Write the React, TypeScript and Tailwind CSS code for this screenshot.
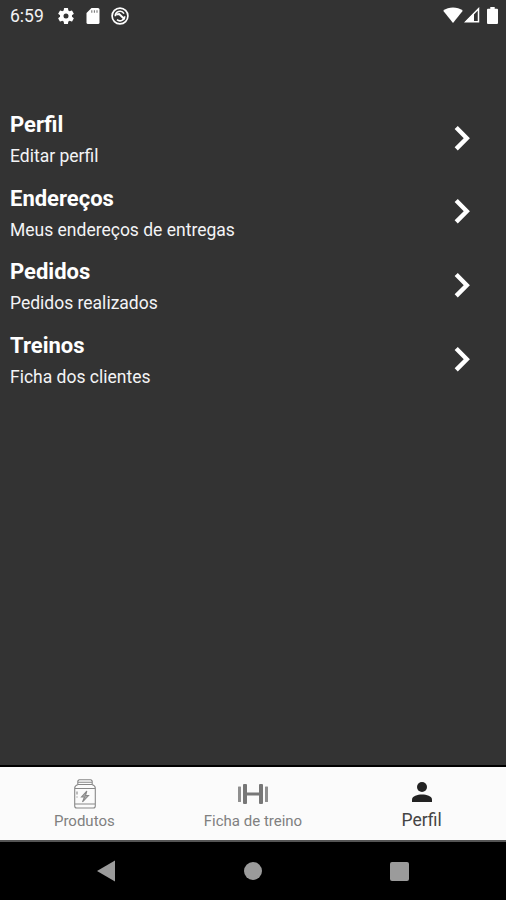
import React from 'react';

const menuItems = [
  { title: 'Perfil', description: 'Editar perfil' },
  { title: 'Endereços', description: 'Meus endereços de entregas' },
  { title: 'Pedidos', description: 'Pedidos realizados' },
  { title: 'Treinos', description: 'Ficha dos clientes' },
];

const StatusBar: React.FC = () => (
  <header className="h-8 flex items-center justify-between pl-2.5 pr-2 text-white">
    <div className="flex items-center">
      <span className="w-[46px] text-[17.5px] leading-8 text-gray-100">6:59</span>
      <svg className="w-5 h-5" viewBox="0 0 24 24" fill="currentColor">
        <path d="M19.14 12.94c.04-.3.06-.61.06-.94 0-.32-.02-.64-.07-.94l2.03-1.58a.49.49 0 0 0 .12-.61l-1.92-3.32a.49.49 0 0 0-.59-.22l-2.39.96c-.5-.38-1.03-.7-1.62-.94l-.36-2.54a.48.48 0 0 0-.48-.41h-3.84a.48.48 0 0 0-.47.41l-.36 2.54c-.59.24-1.13.57-1.62.94l-2.39-.96a.48.48 0 0 0-.59.22L2.74 8.87a.48.48 0 0 0 .12.61l2.03 1.58c-.05.3-.09.63-.09.94s.02.64.07.94l-2.03 1.58a.49.49 0 0 0-.12.61l1.92 3.32c.12.22.37.29.59.22l2.39-.96c.5.38 1.03.7 1.62.94l.36 2.54c.05.24.24.41.48.41h3.84c.24 0 .44-.17.47-.41l.36-2.54c.59-.24 1.13-.56 1.62-.94l2.39.96c.22.08.47 0 .59-.22l1.92-3.32a.48.48 0 0 0-.12-.61l-2.01-1.58zM12 15a3 3 0 1 1 0-6 3 3 0 0 1 0 6z" />
      </svg>
      <svg className="w-[14px] h-4 ml-[10px]" viewBox="0 0 14 16" fill="currentColor">
        <path d="M5.5 0H12a1.5 1.5 0 0 1 1.5 1.5v13A1.5 1.5 0 0 1 12 16H2a1.5 1.5 0 0 1-1.5-1.5V5z" />
        <path d="M5.8 2.3v2.4M8.4 2.3v2.4M11 2.3v2.4" stroke="#777" strokeWidth="1.1" />
      </svg>
      <svg className="w-[18px] h-[18px] ml-[11px]" viewBox="0 0 18 18" fill="none" stroke="currentColor">
        <circle cx="9" cy="9" r="7.9" strokeWidth="1.7" />
        <path d="M4.3 9.2A4.7 4.7 0 0 1 13 6.6M13.7 9.2A4.7 4.7 0 0 1 6 12.7" strokeWidth="1.6" />
        <path d="M5.2 7.6l3-.5 5.4 5.2" strokeWidth="2" />
      </svg>
    </div>
    <div className="flex items-center pb-0.5">
      <svg className="w-5 h-4" viewBox="0 0 20 16" fill="currentColor">
        <path d="M10 16L.2 3.8C3 1.6 6.4.5 10 .5s7 1.1 9.8 3.3z" />
      </svg>
      <svg className="w-4 h-4 ml-px" viewBox="0 0 16 16">
        <path d="M14.5 1.8v13H1.8z" fill="none" stroke="currentColor" strokeWidth="1.5" />
        <path d="M10 6v9H1z" fill="currentColor" />
      </svg>
      <svg className="w-[11px] h-[17px] ml-[7px]" viewBox="0 0 11 17" fill="currentColor">
        <path d="M3.3 0h4.4v1.7H10a1 1 0 0 1 1 1V16a1 1 0 0 1-1 1H1a1 1 0 0 1-1-1V2.7a1 1 0 0 1 1-1h2.3z" />
      </svg>
    </div>
  </header>
);

const MenuRow = ({ title, description }: { title: string; description: string }) => (
  <button className="w-full h-[73.6px] flex items-center justify-between pl-[10px] pr-[35px] text-left">
    <div className="pt-1.5">
      <h2 className="text-[22px] leading-8 font-bold text-white">{title}</h2>
      <p className="text-[17.5px] leading-[31px] text-gray-100">{description}</p>
    </div>
    <svg className="w-[18px] h-7 text-white" viewBox="0 0 18 28" fill="none" stroke="currentColor">
      <path d="M3.2 3.5L13.8 14.2L3.2 24.9" strokeWidth="4.4" />
    </svg>
  </button>
);

const JarIcon: React.FC = () => (
  <svg className="w-6 h-[30px]" viewBox="0 0 24 30" fill="none" stroke="#888" strokeWidth="1.1">
    <path d="M6 .8h12l1.2 1.2v3.5H4.8V2zM5 3.2h14M5 5.5C3 6.2 1.7 7.3 1.7 9v18c0 1.3.7 2 2 2h16.6c1.3 0 2-.7 2-2V9c0-1.7-1.3-2.8-3.3-3.5M1.7 9.5h20.6M1.7 25h20.6M4 12.5v3M4 17.5v1" />
    <path d="M13.8 12l-5.3 6h3l-2 5 6-6.5h-3z" fill="#aaa" />
  </svg>
);

const DumbbellIcon: React.FC = () => (
  <svg className="w-[30px] h-5" viewBox="0 0 30 20" fill="#777">
    <rect x="0" y="2.5" width="3" height="15.5" rx=".5" fill="#8f8f8f" />
    <rect x="5" y="0" width="4" height="20" rx="1" />
    <rect x="9" y="8.5" width="12" height="3" />
    <rect x="21" y="0" width="4" height="20" rx="1" />
    <rect x="27" y="2.5" width="3" height="15.5" rx=".5" fill="#8f8f8f" />
  </svg>
);

const PersonIcon: React.FC = () => (
  <svg className="w-5 h-5" viewBox="0 0 20 20" fill="#222">
    <circle cx="10" cy="5" r="5" />
    <path d="M0 20v-2.5c0-3.3 5.5-5 10-5s10 1.7 10 5V20z" />
  </svg>
);

const TabBar: React.FC = () => (
  <nav className="h-[77px] grid grid-cols-3 bg-[#fbfbfb] border-t-2 border-b-2 border-t-black border-b-[#555] text-[#808080]">
    <div className="flex flex-col items-center">
      <div className="h-11 pt-3 pl-px"><JarIcon /></div>
      <span className="text-[15px] leading-5">Produtos</span>
    </div>
    <div className="flex flex-col items-center">
      <div className="h-11 pt-[17px]"><DumbbellIcon /></div>
      <span className="text-[15px] leading-5">Ficha de treino</span>
    </div>
    <div className="flex flex-col items-center text-[#444]">
      <div className="h-[43px] pt-[15px]"><PersonIcon /></div>
      <span className="text-[17.5px] leading-5">Perfil</span>
    </div>
  </nav>
);

const App: React.FC = () => (
  <div className="w-full h-screen flex flex-col overflow-hidden bg-[#333333] font-['Roboto',sans-serif]">
    <StatusBar />
    <main className="flex-1 pt-[69px]">
      {menuItems.map((item) => (
        <MenuRow key={item.title} {...item} />
      ))}
    </main>
    <TabBar />
    <footer className="h-[58px] grid grid-cols-3 bg-black">
      <div className="flex justify-center pt-[18px] pl-[43px]">
        <svg className="w-[18px] h-[22px]" viewBox="0 0 18 22" fill="#9b9b9b">
          <path d="M18 .5v21L0 11z" />
        </svg>
      </div>
      <div className="flex justify-center pt-5 pl-px">
        <div className="w-[18px] h-[18px] rounded-full bg-[#9b9b9b]" />
      </div>
      <div className="flex justify-center pt-5 pr-[45px]">
        <div className="w-[19px] h-[19px] rounded-[2px] bg-[#9b9b9b]" />
      </div>
    </footer>
  </div>
);

export default App;
